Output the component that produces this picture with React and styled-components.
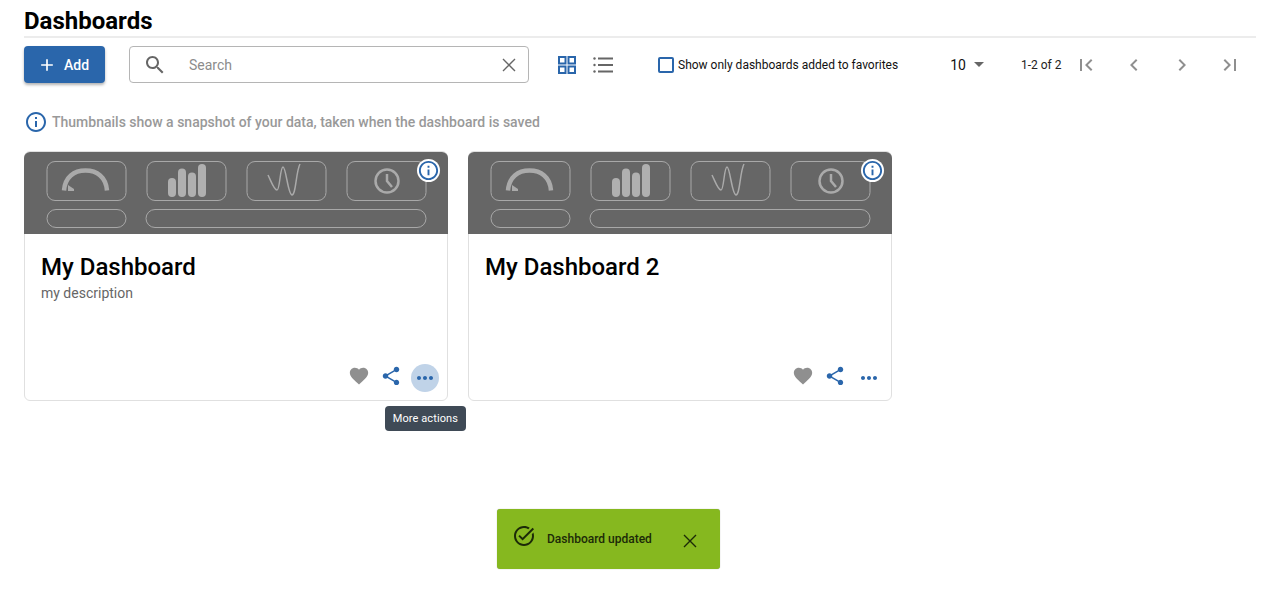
import styled, { createGlobalStyle } from 'styled-components'

const BLUE = '#2a66ab'

const paths = {
  add: 'M19 13h-6v6h-2v-6H5v-2h6V5h2v6h6v2z',
  search: 'M15.5 14h-.79l-.28-.27C15.41 12.59 16 11.11 16 9.5 16 5.91 13.09 3 9.5 3S3 5.91 3 9.5 5.91 16 9.5 16c1.61 0 3.09-.59 4.23-1.57l.27.28v.79l5 4.99L20.49 19l-4.99-5zm-6 0C7.01 14 5 11.99 5 9.5S7.01 5 9.5 5 14 7.01 14 9.5 11.99 14 9.5 14z',
  first: 'M18.41 16.59L13.82 12l4.59-4.59L17 6l-6 6 6 6zM6 6h2v12H6z',
  prev: 'M15.41 7.41L14 6l-6 6 6 6 1.41-1.41L10.83 12z',
  next: 'M10 6L8.59 7.41 13.17 12l-4.58 4.59L10 18l6-6z',
  last: 'M5.59 7.41L10.18 12l-4.59 4.59L7 18l6-6-6-6zM16 6h2v12h-2z',
  info: 'M11 7h2v2h-2zm0 4h2v6h-2zm1-9C6.48 2 2 6.48 2 12s4.48 10 10 10 10-4.48 10-10S17.52 2 12 2zm0 18c-4.41 0-8-3.59-8-8s3.59-8 8-8 8 3.59 8 8-3.59 8-8 8z',
  heart: 'M12 21.35l-1.45-1.32C5.4 15.36 2 12.28 2 8.5 2 5.42 4.42 3 7.5 3c1.74 0 3.41.81 4.5 2.09C13.09 3.81 14.76 3 16.5 3 19.58 3 22 5.42 22 8.5c0 3.78-3.4 6.86-8.55 11.54L12 21.35z',
  share: 'M18 16.08c-.76 0-1.44.3-1.96.77L8.91 12.7c.05-.23.09-.46.09-.7s-.04-.47-.09-.7l7.05-4.11c.54.5 1.25.81 2.04.81 1.66 0 3-1.34 3-3s-1.34-3-3-3-3 1.34-3 3c0 .24.04.47.09.7L8.04 9.81C7.5 9.31 6.79 9 6 9c-1.66 0-3 1.34-3 3s1.34 3 3 3c.79 0 1.5-.31 2.04-.81l7.12 4.16c-.05.21-.08.43-.08.65 0 1.61 1.31 2.92 2.92 2.92 1.61 0 2.92-1.31 2.92-2.92s-1.31-2.92-2.92-2.92z',
  more: 'M6 10c-1.1 0-2 .9-2 2s.9 2 2 2 2-.9 2-2-.9-2-2-2zm12 0c-1.1 0-2 .9-2 2s.9 2 2 2 2-.9 2-2-.9-2-2-2zm-6 0c-1.1 0-2 .9-2 2s.9 2 2 2 2-.9 2-2-.9-2-2-2z',
  check: 'M22 5.18 10.59 16.6l-4.24-4.24 1.41-1.41 2.83 2.83 10-10L22 5.18zm-2.21 5.04c.13.57.21 1.17.21 1.78 0 4.42-3.58 8-8 8s-8-3.58-8-8 3.58-8 8-8c1.58 0 3.04.46 4.28 1.25l1.44-1.44C16.1 2.67 14.13 2 12 2 6.48 2 2 6.48 2 12s4.48 10 10 10 10-4.48 10-10c0-1.19-.22-2.33-.6-3.39l-1.61 1.61z',
}

function Icon({ name, size = 24, color = 'currentColor' }) {
  return (
    <svg width={size} height={size} viewBox="0 0 24 24" fill={color} style={{ display: 'block', flexShrink: 0 }}>
      <path d={paths[name]} />
    </svg>
  )
}

function CloseIcon({ color }) {
  return (
    <svg width="24" height="24" viewBox="0 0 24 24" fill="none" stroke={color} strokeWidth="1.4" style={{ display: 'block', flexShrink: 0 }}>
      <path d="M6 6l12 12M18 6L6 18" />
    </svg>
  )
}

function Thumbnail() {
  const boxes = [23, 123, 223, 323]
  return (
    <svg width="424" height="82" viewBox="0 1 424 82" style={{ display: 'block' }}>
      <g fill="none" stroke="#a8a8a8" strokeWidth="1">
        {boxes.map(x => <rect key={x} x={x} y="10.5" width="79" height="39" rx="8" />)}
        <rect x="23" y="58.5" width="79" height="18" rx="9" />
        <rect x="122" y="58.5" width="280" height="18" rx="9" />
      </g>
      <path d="M40 39.5C41 26 50 19.5 61.5 19.5S82 26 83 39.5" fill="none" stroke="#aaa" strokeWidth="4.5" />
      <path d="M44 34l6 4v2h-6z" fill="#aaa" />
      <g fill="#b0b0b0">
        <rect x="144" y="27" width="8" height="19" rx="4" />
        <rect x="154" y="17.5" width="8" height="28.5" rx="4" />
        <rect x="164" y="21.5" width="8" height="24.5" rx="4" />
        <rect x="174" y="13" width="8" height="33" rx="4" />
      </g>
      <path d="M244 24C247 30 250 39 253 39S256 16 259 16S264 44 268 44S272 20 276 13" fill="none" stroke="#aaa" strokeWidth="1.5" />
      <circle cx="363" cy="30" r="11.5" fill="none" stroke="#aaa" strokeWidth="2.5" />
      <path d="M363 23v7l5 6" fill="none" stroke="#aaa" strokeWidth="2.5" />
    </svg>
  )
}

function DashboardCard({ title, description, active }) {
  return (
    <Card>
      <Thumb>
        <Thumbnail />
        <InfoBadge><Icon name="info" size={23} color={BLUE} /></InfoBadge>
      </Thumb>
      <CardBody>
        <CardTitle>{title}</CardTitle>
        {description && <CardText>{description}</CardText>}
      </CardBody>
      <CardActions>
        <HeartButton><Icon name="heart" size={22} color="#8f8f8f" /></HeartButton>
        <ShareButton><Icon name="share" size={22} color={BLUE} /></ShareButton>
        <MoreButton $active={active}><Icon name="more" size={24} color={BLUE} /></MoreButton>
        {active && <Tooltip>More actions</Tooltip>}
      </CardActions>
    </Card>
  )
}

export default function App() {
  return (
    <Page>
      <GlobalStyle />
      <Title>Dashboards</Title>
      <Toolbar>
        <AddButton><Icon name="add" size={20} />Add</AddButton>
        <SearchBox>
          <Icon name="search" color="#666" />
          <SearchText>Search</SearchText>
          <CloseIcon color="#666" />
        </SearchBox>
        <ViewSwitch>
          <svg width="24" height="24" viewBox="0 0 24 24" fill="none" stroke={BLUE} strokeWidth="2">
            <rect x="4" y="4" width="6.5" height="6.5" />
            <rect x="13.5" y="4" width="6.5" height="6.5" />
            <rect x="4" y="13.5" width="6.5" height="6.5" />
            <rect x="13.5" y="13.5" width="6.5" height="6.5" />
          </svg>
          <svg width="24" height="24" viewBox="0 0 24 24" fill="#666">
            <circle cx="3.5" cy="5.5" r="1.2" />
            <circle cx="3.5" cy="12" r="1.2" />
            <circle cx="3.5" cy="18.5" r="1.2" />
            <rect x="7" y="4.5" width="15" height="2" />
            <rect x="7" y="11" width="15" height="2" />
            <rect x="7" y="17.5" width="15" height="2" />
          </svg>
        </ViewSwitch>
        <Favorites>
          <CheckBox />
          Show only dashboards added to favorites
        </Favorites>
        <PageSize>10<Caret /></PageSize>
        <PageCount>1-2 of 2</PageCount>
        <Pager>
          <Icon name="first" color="#8f8f8f" />
          <Icon name="prev" color="#8f8f8f" />
          <Icon name="next" color="#8f8f8f" />
          <Icon name="last" color="#8f8f8f" />
        </Pager>
      </Toolbar>
      <Hint>
        <Icon name="info" color={BLUE} />
        Thumbnails show a snapshot of your data, taken when the dashboard is saved
      </Hint>
      <Cards>
        <DashboardCard title="My Dashboard" description="my description" active />
        <DashboardCard title="My Dashboard 2" />
      </Cards>
      <Toast>
        <ToastCheck><Icon name="check" color="#1c2a08" /></ToastCheck>
        <ToastText>Dashboard updated</ToastText>
        <ToastClose><CloseIcon color="#1c2a08" /></ToastClose>
      </Toast>
    </Page>
  )
}

const GlobalStyle = createGlobalStyle`
  body {
    margin: 0;
    background: #fff;
    font-family: Roboto, "Liberation Sans", sans-serif;
  }
`

const Page = styled.div`
  height: 590px;
  padding: 0 24px;
  box-sizing: border-box;
  position: relative;
  overflow: hidden;
`

const Title = styled.h1`
  margin: 0;
  height: 36px;
  border-bottom: 2px solid #ececec;
  font-size: 24px;
  font-weight: 700;
  line-height: 43px;
  color: #000;
  box-sizing: content-box;
`

const Toolbar = styled.div`
  display: flex;
  align-items: center;
  height: 37px;
  margin-top: 8px;
`

const AddButton = styled.button`
  display: flex;
  align-items: center;
  gap: 7px;
  width: 81px;
  height: 37px;
  padding: 0 0 0 13px;
  border: 0;
  border-radius: 4px;
  background: ${BLUE};
  color: #fff;
  font: 500 14px Roboto, sans-serif;
  box-shadow: 0 2px 3px rgba(0, 0, 0, 0.3);
`

const SearchBox = styled.div`
  display: flex;
  align-items: center;
  width: 400px;
  height: 37px;
  margin-left: 24px;
  padding: 0 7px 0 13px;
  box-sizing: border-box;
  border: 1px solid #b5b5b5;
  border-radius: 4px;
`

const SearchText = styled.span`
  flex: 1;
  margin-left: 22px;
  font-size: 14px;
  color: #8c8c8c;
`

const ViewSwitch = styled.div`
  display: flex;
  gap: 12px;
  margin-left: 26px;
`

const Favorites = styled.label`
  display: flex;
  align-items: center;
  gap: 4px;
  margin-left: 43px;
  font-size: 12px;
  color: #111;
  white-space: nowrap;
`

const CheckBox = styled.span`
  width: 12px;
  height: 12px;
  border: 2px solid ${BLUE};
  border-radius: 2px;
`

const PageSize = styled.div`
  display: flex;
  align-items: center;
  gap: 8px;
  margin-left: 52px;
  font-size: 14px;
  color: #111;
`

const Caret = styled.span`
  width: 0;
  height: 0;
  border-left: 5px solid transparent;
  border-right: 5px solid transparent;
  border-top: 5px solid #666;
`

const PageCount = styled.div`
  margin-left: 37px;
  font-size: 12px;
  color: #222;
  white-space: nowrap;
`

const Pager = styled.div`
  display: flex;
  gap: 24px;
  margin-left: 13px;
`

const Hint = styled.div`
  display: flex;
  align-items: center;
  gap: 4px;
  margin-top: 27px;
  font-size: 14px;
  font-weight: 500;
  color: #999;
`

const Cards = styled.div`
  display: flex;
  gap: 20px;
  margin-top: 17px;
`

const Card = styled.article`
  display: flex;
  flex-direction: column;
  width: 424px;
  height: 250px;
  box-sizing: border-box;
  border: 1px solid #e0e0e0;
  border-radius: 6px;
`

const Thumb = styled.div`
  position: relative;
  height: 82px;
  margin: 0 -1px;
  background: #666;
  border-radius: 6px 6px 0 0;
  overflow: hidden;
`

const InfoBadge = styled.span`
  position: absolute;
  top: 7px;
  right: 8px;
  display: flex;
  align-items: center;
  justify-content: center;
  width: 23px;
  height: 23px;
  border-radius: 50%;
  background: #fff;
`

const CardBody = styled.div`
  flex: 1;
  padding: 17px 16px 0;
`

const CardTitle = styled.h2`
  margin: 0;
  font-size: 24px;
  font-weight: 500;
  line-height: 32px;
  color: #000;
`

const CardText = styled.p`
  margin: 1px 0 0;
  font-size: 14px;
  line-height: 18px;
  color: #666;
`

const CardActions = styled.div`
  position: relative;
  display: flex;
  justify-content: flex-end;
  align-items: flex-start;
  padding: 0 8px 8px 0;
`

const ActionButton = styled.span`
  display: flex;
  align-items: center;
  justify-content: center;
  width: 28px;
  border-radius: 50%;
`

const HeartButton = styled(ActionButton)`
  height: 24px;
  margin-right: 4px;
`

const ShareButton = styled(ActionButton)`
  height: 24px;
  margin-right: 6px;
`

const MoreButton = styled(ActionButton)`
  height: 28px;
  background: ${({ $active }) => ($active ? '#c0d3e8' : 'transparent')};
`

const Tooltip = styled.div`
  position: absolute;
  top: 42px;
  right: -19px;
  height: 25px;
  padding: 0 8px;
  border-radius: 4px;
  background: #3f4a56;
  color: #fff;
  font-size: 11px;
  letter-spacing: 0.1px;
  line-height: 25px;
  white-space: nowrap;
`

const Toast = styled.div`
  position: absolute;
  left: 497px;
  top: 509px;
  display: flex;
  width: 223px;
  height: 60px;
  box-sizing: border-box;
  border-radius: 3px;
  background: #86b81f;
  box-shadow: 0 0 1px rgba(0, 0, 0, 0.4);
  color: #1c2a08;
`

const ToastCheck = styled.span`
  margin: 15px 0 0 15px;
`

const ToastText = styled.span`
  margin: 22px 0 0 11px;
  font-size: 12px;
  font-weight: 500;
  line-height: 16px;
  white-space: nowrap;
`

const ToastClose = styled.span`
  margin: 20px 0 0 26px;
`
